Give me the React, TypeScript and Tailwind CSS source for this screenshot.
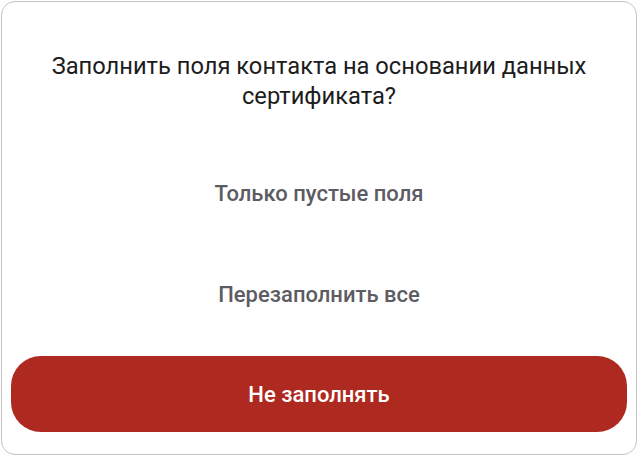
export default function App() {
  return (
    <div className="w-[639px] h-[456px] bg-white p-px" style={{ fontFamily: "Roboto, 'Noto Sans', sans-serif" }}>
      <div className="w-[636px] h-[454px] border border-[#c4c4c4] rounded-[14px] flex flex-col items-center px-[10px]">
        <div className="mt-[49px] w-[590px] text-center text-[23.7px] leading-[30px] text-[#1c1c1c]">
          Заполнить поля контакта на основании данных сертификата?
        </div>
        <div className="mt-[68px] text-[22px] font-medium text-[#5c5c62] leading-[30px]">Только пустые поля</div>
        <div className="mt-[71px] text-[22px] font-medium text-[#5c5c62] leading-[30px]">Перезаполнить все</div>
        <div className="mt-[46px] w-[616px] h-[76px] rounded-[30px] bg-[#ae291f] flex items-center justify-center text-white text-[22px] font-medium">
          Не заполнять
        </div>
      </div>
    </div>
  );
}
